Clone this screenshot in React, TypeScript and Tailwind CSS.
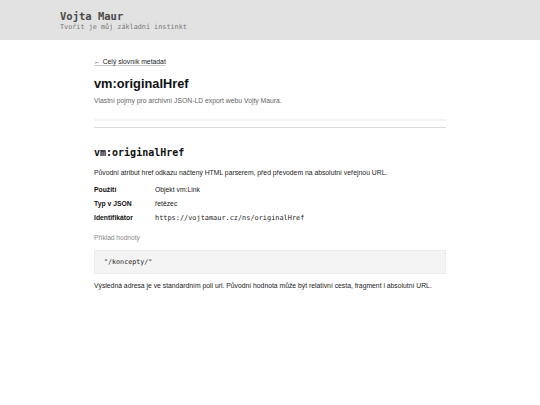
const mono = "font-['DejaVu_Sans_Mono',monospace]";
const sans = "font-['Liberation_Sans',Arial,sans-serif]";

const rows = [
  { label: "Použití", value: "Objekt vm:Link", code: false },
  { label: "Typ v JSON", value: "řetězec", code: false },
  { label: "Identifikátor", value: "https://vojtamaur.cz/ns/originalHref", code: true },
];

export default function App() {
  return (
    <div className={`min-h-[405px] bg-white text-[#222] ${sans}`}>
      <header className="h-[40px] bg-[#e2e2e2]">
        <div className={`w-[420px] mx-auto pt-[9px] ${mono}`}>
          <div className="text-[10.5px] leading-[14px] font-bold text-[#4a4a4a]">Vojta Maur</div>
          <div className="text-[6.8px] leading-[9px] text-[#777]">Tvořit je můj základní instinkt</div>
        </div>
      </header>

      <main className="w-[352px] mx-auto pt-[17px]">
        <a href="#" className="block text-[6.8px] leading-[10px] text-[#222] underline decoration-[#ccc]">
          ← Celý slovník metadat
        </a>
        <h1 className="mt-[9px] text-[12.8px] leading-[16px] font-bold text-[#111]">vm:originalHref</h1>
        <p className="mt-[4px] text-[6.8px] leading-[10px] text-[#666]">
          Vlastní pojmy pro archivní JSON-LD export webu Vojty Maura.
        </p>
        <div className="mt-[13px] h-[2px] bg-[#f3f3f3]"></div>
        <div className="mt-[6px] h-px bg-[#dcdcdc]"></div>

        <section>
          <h2 className={`mt-[18px] text-[10px] leading-[14px] font-bold text-[#111] ${mono}`}>vm:originalHref</h2>
          <p className="mt-[8px] text-[6.8px] leading-[10px]">
            Původní atribut href odkazu načtený HTML parserem, před převodem na absolutní veřejnou URL.
          </p>
          <div className="mt-[5px]">
            {rows.map((r) => (
              <div key={r.label} className="flex h-[14px] items-center text-[6.8px]">
                <div className="w-[61px] font-bold text-[#111]">{r.label}</div>
                <div className={r.code ? `${mono} text-[6.9px]` : ""}>{r.value}</div>
              </div>
            ))}
          </div>
          <div className="mt-[8px] text-[6.6px] leading-[10px] text-[#888]">Příklad hodnoty</div>
          <pre className={`mt-[7px] h-[24px] flex items-center px-[9px] bg-[#f4f4f4] border border-[#ececec] text-[6.7px] text-[#222] ${mono}`}>
            "/koncepty/"
          </pre>
          <p className="mt-[7px] text-[6.8px] leading-[10px]">
            Výsledná adresa je ve standardním poli url. Původní hodnota může být relativní cesta, fragment i absolutní URL.
          </p>
        </section>
      </main>
    </div>
  );
}
